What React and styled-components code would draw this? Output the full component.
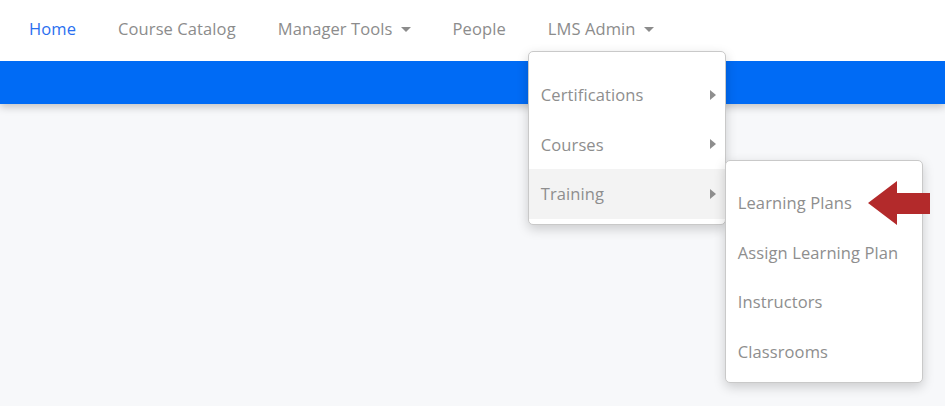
import React from "react";
import styled, { createGlobalStyle } from "styled-components";

const Global = createGlobalStyle`
  html, body { margin: 0; padding: 0; }
  body {
    background: #f7f8fa;
    font-family: "Open Sans", "Liberation Sans", sans-serif;
    width: 945px;
    height: 406px;
    overflow: hidden;
  }
`;

const Page = styled.div`
  position: relative;
  width: 945px;
  height: 406px;
`;

const Header = styled.header`
  background: #ffffff;
  height: 61px;
  display: flex;
  align-items: stretch;
  padding-left: 8px;
  position: relative;
  z-index: 3;
`;

const NavItem = styled.div`
  position: relative;
  box-sizing: border-box;
  height: 61px;
  display: flex;
  align-items: center;
  gap: 8px;
  padding: 0 21px 5px;
  font-size: 16.5px;
  color: ${(p) => (p.$active ? "#2a6ff0" : "#8c8c8c")};
  letter-spacing: 0.1px;
`;

const Caret = styled.span`
  width: 0;
  height: 0;
  border-left: 5px solid transparent;
  border-right: 5px solid transparent;
  border-top: 5px solid #8c8c8c;
  margin-top: 2px;
`;

const BlueBar = styled.div`
  height: 43px;
  background: #006bf5;
  box-shadow: 0 3px 8px rgba(0, 0, 0, 0.22);
  position: relative;
  z-index: 2;
`;

const Menu = styled.div`
  position: absolute;
  top: ${(p) => p.$top}px;
  left: ${(p) => p.$left};
  width: 198px;
  box-sizing: border-box;
  background: #fff;
  border: 1px solid #c9c9c9;
  border-radius: 5px;
  box-shadow: 0 4px 12px rgba(0, 0, 0, 0.18);
  padding: ${(p) => p.$pad};
  z-index: 5;
`;

const MenuItem = styled.div`
  position: relative;
  height: 49.5px;
  display: flex;
  align-items: center;
  justify-content: space-between;
  padding: 0 9px 0 12px;
  font-size: 16.5px;
  color: #8e8e8e;
  background: ${(p) => (p.$hover ? "#f3f3f3" : "transparent")};
`;

const RightTri = styled.span`
  width: 0;
  height: 0;
  border-top: 5px solid transparent;
  border-bottom: 5px solid transparent;
  border-left: 6px solid #8e8e8e;
`;

const Arrow = styled.svg`
  position: absolute;
  left: 142px;
  top: 3px;
`;

export default function App() {
  return (
    <Page>
      <Global />
      <Header>
        <NavItem $active>Home</NavItem>
        <NavItem>Course Catalog</NavItem>
        <NavItem>
          Manager Tools <Caret />
        </NavItem>
        <NavItem>People</NavItem>
        <NavItem>
          LMS Admin <Caret />
          <Menu $top={51} $left="1px" $pad="18px 0 5px">
            <MenuItem>
              Certifications <RightTri />
            </MenuItem>
            <MenuItem>
              Courses <RightTri />
            </MenuItem>
            <MenuItem $hover>
              Training <RightTri />
              <Menu $top={-9} $left="100%" $pad="17px 0 6px">
                <MenuItem>
                  Learning Plans
                  <Arrow width="62" height="45" viewBox="0 0 62 45">
                    <polygon
                      points="0,22 29,0 29,12 62,12 62,33 29,33 29,44"
                      fill="#b32a2b"
                    />
                  </Arrow>
                </MenuItem>
                <MenuItem>Assign Learning Plan</MenuItem>
                <MenuItem>Instructors</MenuItem>
                <MenuItem>Classrooms</MenuItem>
              </Menu>
            </MenuItem>
          </Menu>
        </NavItem>
      </Header>
      <BlueBar />
    </Page>
  );
}
